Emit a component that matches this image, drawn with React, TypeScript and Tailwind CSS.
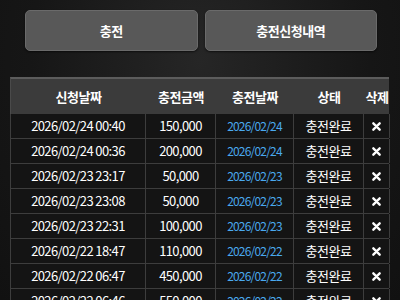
import React from "react";

const rows = [
  ["2026/02/24 00:40", "150,000", "2026/02/24"],
  ["2026/02/24 00:36", "200,000", "2026/02/24"],
  ["2026/02/23 23:17", "50,000", "2026/02/23"],
  ["2026/02/23 23:08", "50,000", "2026/02/23"],
  ["2026/02/23 22:31", "100,000", "2026/02/23"],
  ["2026/02/22 18:47", "110,000", "2026/02/22"],
  ["2026/02/22 06:47", "450,000", "2026/02/22"],
  ["2026/02/22 06:46", "550,000", "2026/02/22"],
];

const font = { fontFamily: '"Noto Sans CJK KR", "Noto Sans", Roboto, sans-serif' };

export default function App() {
  return (
    <div
      className="w-[400px] h-[300px] overflow-hidden bg-[#151515] bg-[radial-gradient(ellipse_at_50%_20%,#262626_0%,#161616_60%,#111111_100%)] text-white"
      style={font}
    >
      <div className="flex gap-[7px] ml-[25px] w-[352px] pt-[10px]">
        <div className="flex-1 h-[41px] rounded-[5px] bg-[#585858] border border-[#6a6a6a] flex items-center justify-center text-[13px] font-bold tracking-[-0.5px] shadow-[0_1px_2px_rgba(0,0,0,0.6)]">
          충전
        </div>
        <div className="flex-1 h-[41px] rounded-[5px] bg-[#585858] border border-[#6a6a6a] flex items-center justify-center text-[13px] font-bold tracking-[-0.5px] shadow-[0_1px_2px_rgba(0,0,0,0.6)]">
          충전신청내역
        </div>
      </div>
      <div className="ml-[10px] w-[379px] mt-[26px]">
        <div className="grid grid-cols-[135px_70px_78px_70px_26px] h-[37px] bg-[#3b3b3b] border-t-2 border-t-[#5c5c5c] border-l border-l-[#4a4a4a] text-[13px] font-bold tracking-[-0.5px]">
          <div className="flex items-center justify-center">신청날짜</div>
          <div className="flex items-center justify-center">충전금액</div>
          <div className="flex items-center justify-center">충전날짜</div>
          <div className="flex items-center justify-center">상태</div>
          <div className="flex items-center justify-center whitespace-nowrap">삭제</div>
        </div>
        {rows.map((r, i) => (
          <div
            key={i}
            className="grid grid-cols-[135px_70px_78px_70px_26px] h-[25px] bg-[#141414] border-b border-[#3d3d3d] border-l text-[13px]"
          >
            <div className="flex items-center justify-center border-r border-[#3d3d3d] tracking-[-0.6px]">{r[0]}</div>
            <div className="flex items-center justify-center border-r border-[#3d3d3d] tracking-[-0.6px]">{r[1]}</div>
            <div className="flex items-center justify-center border-r border-[#3d3d3d] text-[12px] text-[#4aa9ee] tracking-[-0.8px]">{r[2]}</div>
            <div className="flex items-center justify-center border-r border-[#3d3d3d] tracking-[-0.5px]">충전완료</div>
            <div className="flex items-center justify-center border-r border-[#3d3d3d]">
              <svg width="9" height="9" viewBox="0 0 10 10">
                <path d="M1.5 1.5 L8.5 8.5 M8.5 1.5 L1.5 8.5" stroke="white" strokeWidth="2.6" strokeLinecap="round" />
              </svg>
            </div>
          </div>
        ))}
      </div>
    </div>
  );
}
